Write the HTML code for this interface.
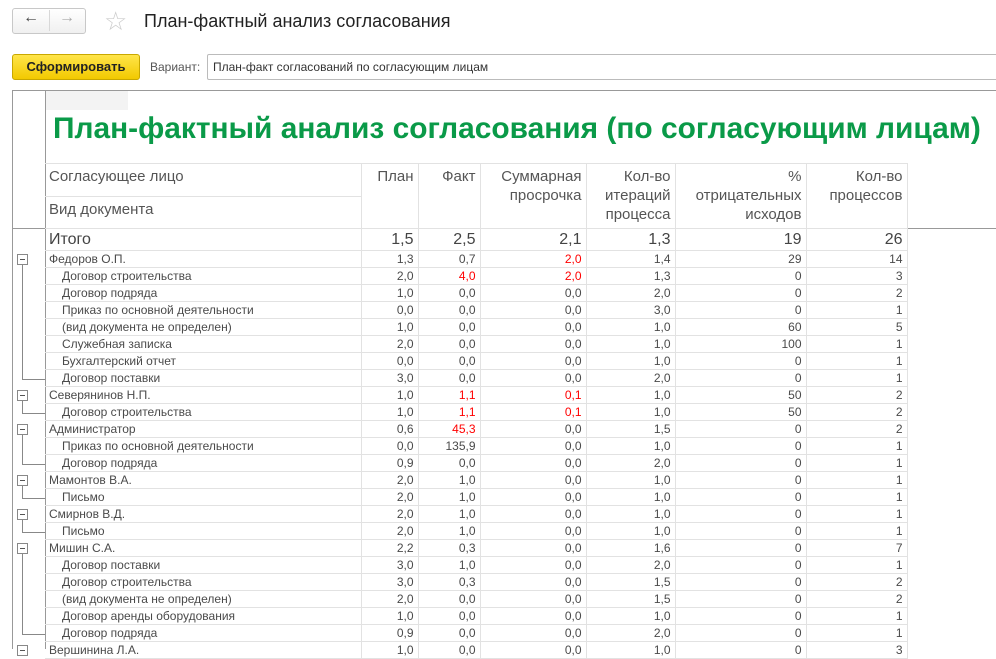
<!DOCTYPE html><html><head><meta charset="utf-8"><style>
body{margin:0;width:996px;height:649px;overflow:hidden;background:#fff;font-family:"Liberation Sans",Arial,sans-serif;color:#333;position:relative}
.a{position:absolute}
table{position:absolute;left:45px;border-collapse:collapse;table-layout:fixed;font-size:12px;color:#4a4a4a}
td{border:1px solid #e2e2e2;height:16px;padding:0 4px 0 4px;text-align:right;white-space:nowrap;overflow:hidden;line-height:16px}
td:first-child{text-align:left;border-left:none}
.c td:first-child{padding-left:17px}
.r{color:#f00}
.hd td{vertical-align:top;font-size:15px;color:#555;line-height:19px;padding-top:3px;white-space:normal}
.bx{position:absolute;left:17px;width:9px;height:9px;border:1px solid #888;background:#fff}
.bx:after{content:"";position:absolute;left:2px;top:4px;width:5px;height:1px;background:#555}
.vl{position:absolute;left:22px;width:1px;background:#888}
.hl{position:absolute;left:22px;width:23px;height:1px;background:#888}
</style></head><body>
<div class="a" style="left:12px;top:8px;width:72px;height:24px;border:1px solid #c8c8c8;border-radius:3px;background:linear-gradient(#fff,#f0f0f0)"></div>
<div class="a" style="left:49px;top:10px;width:1px;height:21px;background:#d8d8d8"></div>
<div class="a" style="left:23px;top:9px;font-size:16px;color:#444">&#8592;</div>
<div class="a" style="left:59px;top:9px;font-size:16px;color:#aaa">&#8594;</div>
<div class="a" style="left:104px;top:6px;font-size:26px;color:#ccc">&#9734;</div>
<div class="a" style="left:144px;top:11px;font-size:18px;color:#222">План-фактный анализ согласования</div>
<div class="a" style="left:12px;top:54px;width:126px;height:24px;border:1px solid #c9a800;border-radius:3px;background:linear-gradient(#ffe54a,#f2c900);font-weight:bold;font-size:13px;line-height:24px;text-align:center;color:#222">Сформировать</div>
<div class="a" style="left:150px;top:60px;font-size:12px;color:#555">Вариант:</div>
<div class="a" style="left:207px;top:54px;width:800px;height:24px;border:1px solid #bbb;border-radius:2px;font-size:12px;line-height:24px;padding-left:5px;color:#333">План-факт согласований по согласующим лицам</div>
<div class="a" style="left:12px;top:90px;width:984px;height:1px;background:#999"></div>
<div class="a" style="left:12px;top:90px;width:1px;height:559px;background:#999"></div>
<div class="a" style="left:45px;top:90px;width:1px;height:559px;background:#999"></div>
<div class="a" style="left:46px;top:91px;width:82px;height:19px;background:#f3f3f3"></div>
<div class="a" style="left:53px;top:112px;font-size:29.9px;font-weight:bold;color:#0a9a48;white-space:nowrap">План-фактный анализ согласования (по согласующим лицам)</div>
<div class="a" style="left:12px;top:228px;width:984px;height:1px;background:#999"></div>
<table style="top:163px;width:862px">
<colgroup><col style="width:316px"><col style="width:57px"><col style="width:62px"><col style="width:106px"><col style="width:89px"><col style="width:131px"><col style="width:101px"></colgroup>
<tr class="hd"><td style="height:29px;padding-left:4px">Согласующее лицо</td><td rowspan="2">План</td><td rowspan="2">Факт</td><td rowspan="2">Суммарная просрочка</td><td rowspan="2">Кол-во итераций процесса</td><td rowspan="2">%<br>отрицательных исходов</td><td rowspan="2">Кол-во процессов</td></tr>
<tr class="hd"><td style="height:28px">Вид документа</td></tr>
<tr style="font-size:16px;color:#444"><td style="height:21px;line-height:21px;border-top:1px solid #999">Итого</td><td style="border-top:1px solid #999">1,5</td><td style="border-top:1px solid #999">2,5</td><td style="border-top:1px solid #999">2,1</td><td style="border-top:1px solid #999">1,3</td><td style="border-top:1px solid #999">19</td><td style="border-top:1px solid #999">26</td></tr>
<tr><td>Федоров О.П.</td><td>1,3</td><td>0,7</td><td class="r">2,0</td><td>1,4</td><td>29</td><td>14</td></tr>
<tr class="c"><td>Договор строительства</td><td>2,0</td><td class="r">4,0</td><td class="r">2,0</td><td>1,3</td><td>0</td><td>3</td></tr>
<tr class="c"><td>Договор подряда</td><td>1,0</td><td>0,0</td><td>0,0</td><td>2,0</td><td>0</td><td>2</td></tr>
<tr class="c"><td>Приказ по основной деятельности</td><td>0,0</td><td>0,0</td><td>0,0</td><td>3,0</td><td>0</td><td>1</td></tr>
<tr class="c"><td>(вид документа не определен)</td><td>1,0</td><td>0,0</td><td>0,0</td><td>1,0</td><td>60</td><td>5</td></tr>
<tr class="c"><td>Служебная записка</td><td>2,0</td><td>0,0</td><td>0,0</td><td>1,0</td><td>100</td><td>1</td></tr>
<tr class="c"><td>Бухгалтерский отчет</td><td>0,0</td><td>0,0</td><td>0,0</td><td>1,0</td><td>0</td><td>1</td></tr>
<tr class="c"><td>Договор поставки</td><td>3,0</td><td>0,0</td><td>0,0</td><td>2,0</td><td>0</td><td>1</td></tr>
<tr><td>Северянинов Н.П.</td><td>1,0</td><td class="r">1,1</td><td class="r">0,1</td><td>1,0</td><td>50</td><td>2</td></tr>
<tr class="c"><td>Договор строительства</td><td>1,0</td><td class="r">1,1</td><td class="r">0,1</td><td>1,0</td><td>50</td><td>2</td></tr>
<tr><td>Администратор</td><td>0,6</td><td class="r">45,3</td><td>0,0</td><td>1,5</td><td>0</td><td>2</td></tr>
<tr class="c"><td>Приказ по основной деятельности</td><td>0,0</td><td>135,9</td><td>0,0</td><td>1,0</td><td>0</td><td>1</td></tr>
<tr class="c"><td>Договор подряда</td><td>0,9</td><td>0,0</td><td>0,0</td><td>2,0</td><td>0</td><td>1</td></tr>
<tr><td>Мамонтов В.А.</td><td>2,0</td><td>1,0</td><td>0,0</td><td>1,0</td><td>0</td><td>1</td></tr>
<tr class="c"><td>Письмо</td><td>2,0</td><td>1,0</td><td>0,0</td><td>1,0</td><td>0</td><td>1</td></tr>
<tr><td>Смирнов В.Д.</td><td>2,0</td><td>1,0</td><td>0,0</td><td>1,0</td><td>0</td><td>1</td></tr>
<tr class="c"><td>Письмо</td><td>2,0</td><td>1,0</td><td>0,0</td><td>1,0</td><td>0</td><td>1</td></tr>
<tr><td>Мишин С.А.</td><td>2,2</td><td>0,3</td><td>0,0</td><td>1,6</td><td>0</td><td>7</td></tr>
<tr class="c"><td>Договор поставки</td><td>3,0</td><td>1,0</td><td>0,0</td><td>2,0</td><td>0</td><td>1</td></tr>
<tr class="c"><td>Договор строительства</td><td>3,0</td><td>0,3</td><td>0,0</td><td>1,5</td><td>0</td><td>2</td></tr>
<tr class="c"><td>(вид документа не определен)</td><td>2,0</td><td>0,0</td><td>0,0</td><td>1,5</td><td>0</td><td>2</td></tr>
<tr class="c"><td>Договор аренды оборудования</td><td>1,0</td><td>0,0</td><td>0,0</td><td>1,0</td><td>0</td><td>1</td></tr>
<tr class="c"><td>Договор подряда</td><td>0,9</td><td>0,0</td><td>0,0</td><td>2,0</td><td>0</td><td>1</td></tr>
<tr><td>Вершинина Л.А.</td><td>1,0</td><td>0,0</td><td>0,0</td><td>1,0</td><td>0</td><td>3</td></tr>
</table>
<div class="bx" style="top:254px"></div><div class="vl" style="top:265px;height:114px"></div><div class="hl" style="top:379px"></div>
<div class="bx" style="top:390px"></div><div class="vl" style="top:401px;height:12px"></div><div class="hl" style="top:413px"></div>
<div class="bx" style="top:424px"></div><div class="vl" style="top:435px;height:29px"></div><div class="hl" style="top:464px"></div>
<div class="bx" style="top:475px"></div><div class="vl" style="top:486px;height:12px"></div><div class="hl" style="top:498px"></div>
<div class="bx" style="top:509px"></div><div class="vl" style="top:520px;height:12px"></div><div class="hl" style="top:532px"></div>
<div class="bx" style="top:543px"></div><div class="vl" style="top:554px;height:80px"></div><div class="hl" style="top:634px"></div>
<div class="bx" style="top:645px"></div>
</body></html>
